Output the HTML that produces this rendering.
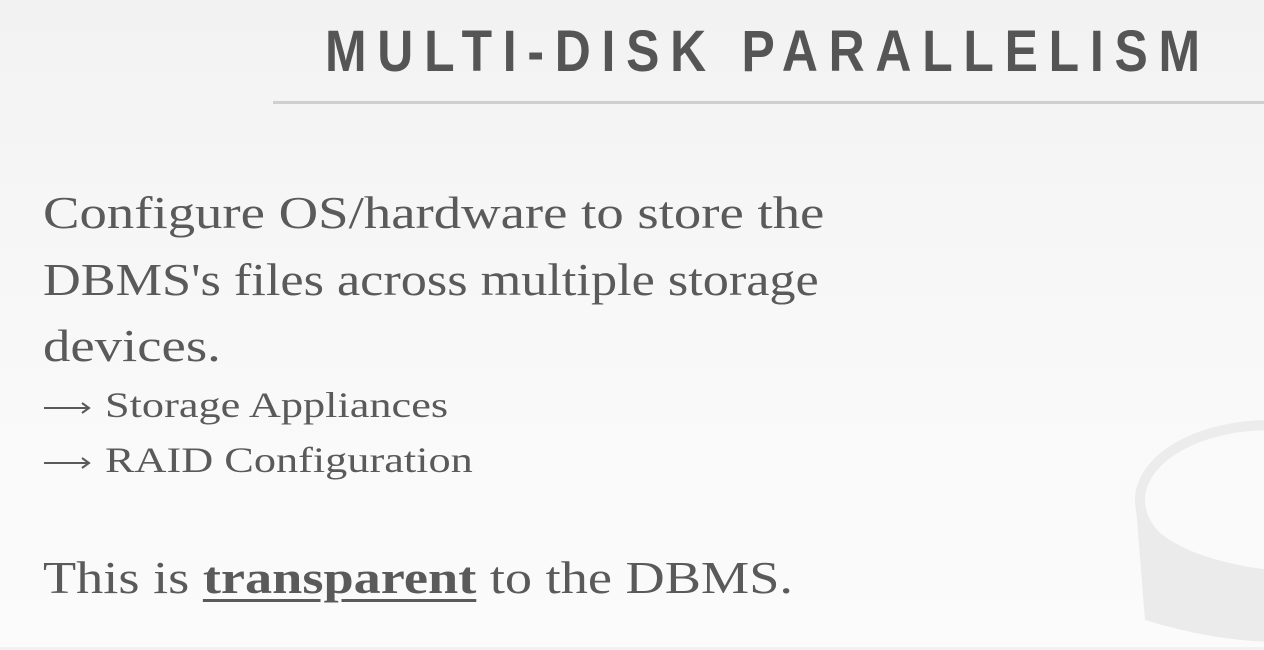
<!DOCTYPE html>
<html><head><meta charset="utf-8"><style>
html,body{margin:0;padding:0}
body{width:1264px;height:647px;overflow:hidden;position:relative;background:linear-gradient(#f2f2f2,#f9f9f9 60%,#fbfbfb);font-family:"Liberation Serif",serif;color:#5a5a5a}
.t{position:absolute;white-space:nowrap;transform-origin:0 0}
#title{left:325px;top:18px;font-family:"Liberation Sans",sans-serif;font-weight:bold;font-size:58px;letter-spacing:12.5px;color:#555;transform:scaleX(0.86)}
#rule{position:absolute;left:273px;right:0;top:101px;height:3px;background:#cfcfcf}
.b{font-size:46px;left:43px;transform:scaleX(1.19)}
.s{font-size:36px;left:105px;transform:scaleX(1.23)}
u{text-decoration-thickness:3px;text-underline-offset:6px}
</style></head><body>
<div class="t" id="title">MULTI-DISK PARALLELISM</div>
<div id="rule"></div>
<svg style="position:absolute;left:1110px;top:380px" width="160" height="270">
<ellipse cx="160" cy="120" rx="130" ry="75" fill="none" stroke="#ececec" stroke-width="10"/>
<path d="M25 115 L35 240 Q100 260 160 262 L160 190 Q40 175 25 115Z" fill="#ebebeb"/>
</svg>
<div class="t b" style="top:186px">Configure OS/hardware to store the</div>
<div class="t b" style="top:253px;transform:scaleX(1.136)">DBMS's files across multiple storage</div>
<div class="t b" style="top:319px">devices.</div>
<svg style="position:absolute;left:43px;top:395px" width="50" height="80">
<g stroke="#5a5a5a" stroke-width="2" fill="none">
<path d="M1 13H46M39 8L46 13L39 18"/>
<path d="M1 68H46M39 63L46 68L39 73"/>
</g></svg>
<div class="t s" style="top:384px">Storage Appliances</div>
<div class="t s" style="top:439px">RAID Configuration</div>
<div class="t b" style="top:551px;transform:scaleX(1.18)">This is <u><b>transparent</b></u> to the DBMS.</div>
</body></html>
